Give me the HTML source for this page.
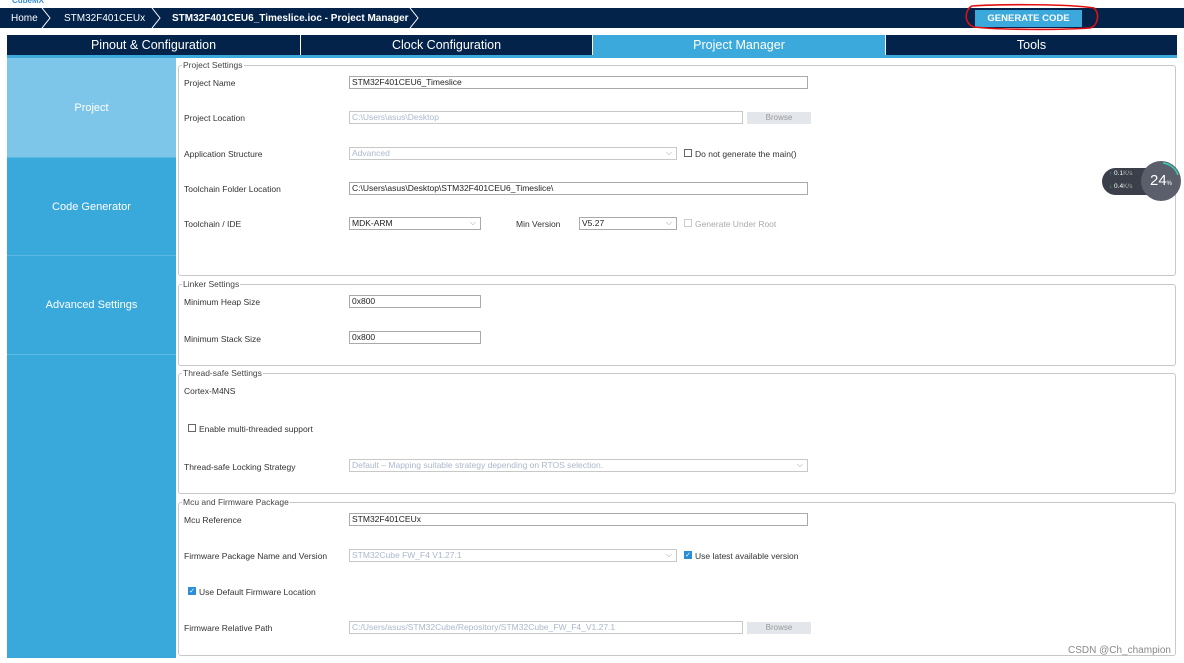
<!DOCTYPE html>
<html><head><style>
*{box-sizing:border-box;margin:0;padding:0}
body{width:1184px;height:663px;background:#fff;font-family:"Liberation Sans",sans-serif;position:relative;overflow:hidden;font-size:9px;color:#333}
.a{position:absolute}
.nav{left:0;top:8px;width:1184px;height:20px;background:#03234b;color:#fff;font-size:10px}
.tab{top:35px;height:20px;background:#03234b;color:#fff;font-size:12.5px;text-align:center;line-height:20px}
.side{left:7px;top:58px;width:169px;height:600px;background:#39a9dc}
.si{position:absolute;left:0;width:169px;color:#fff;font-size:11px;text-align:center;border-bottom:1px solid #5bb8e3}
.fs{border:1px solid #c8c8c8;border-radius:3px;left:178px;width:998px}
.lg{position:absolute;left:3px;top:-6px;background:#fff;padding:0 1px;font-size:8.5px;color:#444}
.lb{position:absolute;font-size:8.5px;color:#333}
.in{position:absolute;height:13px;border:1px solid #aaa;font-size:8.5px;line-height:11px;padding-left:2px;background:#fff;color:#222}
.dis{color:#aab8cc;border-color:#c8c8c8}
.br{position:absolute;width:64px;height:12px;background:#e3e6ea;color:#999;font-size:8px;text-align:center;line-height:12px}
.cb{position:absolute;width:8px;height:8px;border:1px solid #666;background:#fff}
.cbc{background:#2a8fd6;border-color:#2a8fd6;color:#fff;font-size:7px;line-height:7px;text-align:center}
.dd::after{content:"⌵";position:absolute;right:4px;top:-1px;color:#999;font-size:8px}
</style></head><body>
<div class="a" style="left:12px;top:-4px;color:#3a8fd0;font-size:8px;font-weight:bold">CubeMX</div>
<div class="a nav">
<span class="a" style="left:11px;top:5px">Home</span>
<svg class="a" style="left:40px;top:0" width="12" height="20"><path d="M2 0 L10 10 L2 20" stroke="#fff" fill="none"/></svg>
<span class="a" style="left:64px;top:5px">STM32F401CEUx</span>
<svg class="a" style="left:150px;top:0" width="12" height="20"><path d="M2 0 L10 10 L2 20" stroke="#fff" fill="none"/></svg>
<span class="a" style="left:172px;top:5px;font-weight:bold">STM32F401CEU6_Timeslice.ioc - Project Manager</span>
<svg class="a" style="left:408px;top:0" width="12" height="20"><path d="M2 0 L10 10 L2 20" stroke="#fff" fill="none"/></svg>
<div class="a" style="left:975px;top:2px;width:107px;height:17px;background:#3ca9dc;text-align:center;line-height:17px;font-size:9.5px;font-weight:bold">GENERATE CODE</div>
</div>
<svg class="a" style="left:960px;top:2px" width="142" height="30"><path d="M12 4 C40 2 110 2 134 6 C140 12 138 24 130 26 C100 28 40 28 14 25 C4 22 4 8 12 4Z" stroke="#e01010" stroke-width="1.6" fill="none"/></svg>
<div class="a tab" style="left:7px;width:293px">Pinout &amp; Configuration</div>
<div class="a tab" style="left:301px;width:291px">Clock Configuration</div>
<div class="a tab" style="left:593px;width:292px;background:#3ca9dc">Project Manager</div>
<div class="a tab" style="left:886px;width:291px">Tools</div>
<div class="a" style="left:7px;top:55px;width:1170px;height:3px;background:#3ca9dc"></div>
<div class="a side">
<div class="si" style="top:0;height:100px;line-height:100px;background:#7ec6e9">Project</div>
<div class="si" style="top:100px;height:98px;line-height:98px">Code Generator</div>
<div class="si" style="top:198px;height:99px;line-height:99px">Advanced Settings</div>
</div>

<div class="a fs" style="top:65px;height:211px"><span class="lg">Project Settings</span></div>
<span class="lb" style="left:184px;top:78px">Project Name</span>
<div class="in" style="left:349px;top:76px;width:459px">STM32F401CEU6_Timeslice</div>
<span class="lb" style="left:184px;top:113px">Project Location</span>
<div class="in dis" style="left:349px;top:111px;width:394px">C:\Users\asus\Desktop</div>
<div class="br" style="left:747px;top:112px">Browse</div>
<span class="lb" style="left:184px;top:149px">Application Structure</span>
<div class="in dis dd" style="left:349px;top:147px;width:328px">Advanced</div>
<div class="cb" style="left:684px;top:149px"></div><span class="lb" style="left:695px;top:149px">Do not generate the main()</span>
<span class="lb" style="left:184px;top:184px">Toolchain Folder Location</span>
<div class="in" style="left:349px;top:182px;width:459px">C:\Users\asus\Desktop\STM32F401CEU6_Timeslice\</div>
<span class="lb" style="left:184px;top:219px">Toolchain / IDE</span>
<div class="in dd" style="left:349px;top:217px;width:132px">MDK-ARM</div>
<span class="lb" style="left:516px;top:219px">Min Version</span>
<div class="in dd" style="left:579px;top:217px;width:98px">V5.27</div>
<div class="cb" style="left:684px;top:219px;border-color:#ccc"></div><span class="lb" style="left:695px;top:219px;color:#aaa">Generate Under Root</span>

<div class="a fs" style="top:284px;height:82px"><span class="lg">Linker Settings</span></div>
<span class="lb" style="left:184px;top:297px">Minimum Heap Size</span>
<div class="in" style="left:349px;top:295px;width:132px">0x800</div>
<span class="lb" style="left:184px;top:334px">Minimum Stack Size</span>
<div class="in" style="left:349px;top:331px;width:132px">0x800</div>

<div class="a fs" style="top:373px;height:121px"><span class="lg">Thread-safe Settings</span></div>
<span class="lb" style="left:184px;top:386px">Cortex-M4NS</span>
<div class="cb" style="left:188px;top:424px"></div><span class="lb" style="left:199px;top:424px">Enable multi-threaded support</span>
<span class="lb" style="left:184px;top:462px">Thread-safe Locking Strategy</span>
<div class="in dis dd" style="left:349px;top:459px;width:459px">Default  –  Mapping suitable strategy depending on RTOS selection.</div>

<div class="a fs" style="top:502px;height:154px"><span class="lg">Mcu and Firmware Package</span></div>
<span class="lb" style="left:184px;top:515px">Mcu Reference</span>
<div class="in" style="left:349px;top:513px;width:459px">STM32F401CEUx</div>
<span class="lb" style="left:184px;top:551px">Firmware Package Name and Version</span>
<div class="in dis dd" style="left:349px;top:549px;width:328px">STM32Cube FW_F4 V1.27.1</div>
<div class="cb cbc" style="left:684px;top:551px">✓</div><span class="lb" style="left:695px;top:551px">Use latest available version</span>
<div class="cb cbc" style="left:188px;top:587px">✓</div><span class="lb" style="left:199px;top:587px">Use Default Firmware Location</span>
<span class="lb" style="left:184px;top:623px">Firmware Relative Path</span>
<div class="in dis" style="left:349px;top:621px;width:394px">C:/Users/asus/STM32Cube/Repository/STM32Cube_FW_F4_V1.27.1</div>
<div class="br" style="left:747px;top:622px">Browse</div>
<span class="lb" style="left:1068px;top:645px;color:#888;font-size:10px">CSDN @Ch_champion</span>

<div class="a" style="left:1102px;top:168px;width:60px;height:27px;border-radius:14px;background:#3a3f4a"></div>
<span class="a" style="left:1109px;top:170px;color:#fff;font-size:6.5px"><span style="color:#3aaeea">↑</span> 0.1<span style="color:#aaa">K/s</span></span>
<span class="a" style="left:1109px;top:183px;color:#fff;font-size:6.5px"><span style="color:#3c3">↓</span> 0.4<span style="color:#aaa">K/s</span></span>
<div class="a" style="left:1141px;top:161px;width:40px;height:40px;border-radius:50%;background:#5a5f6b;color:#fff;font-size:15px;text-align:center;line-height:40px">24<span style="font-size:6px">%</span></div>
<svg class="a" style="left:1141px;top:161px" width="40" height="40"><path d="M22 2 A18 18 0 0 1 37 14" stroke="#3ccfb4" stroke-width="1.5" fill="none"/></svg>
</body></html>
